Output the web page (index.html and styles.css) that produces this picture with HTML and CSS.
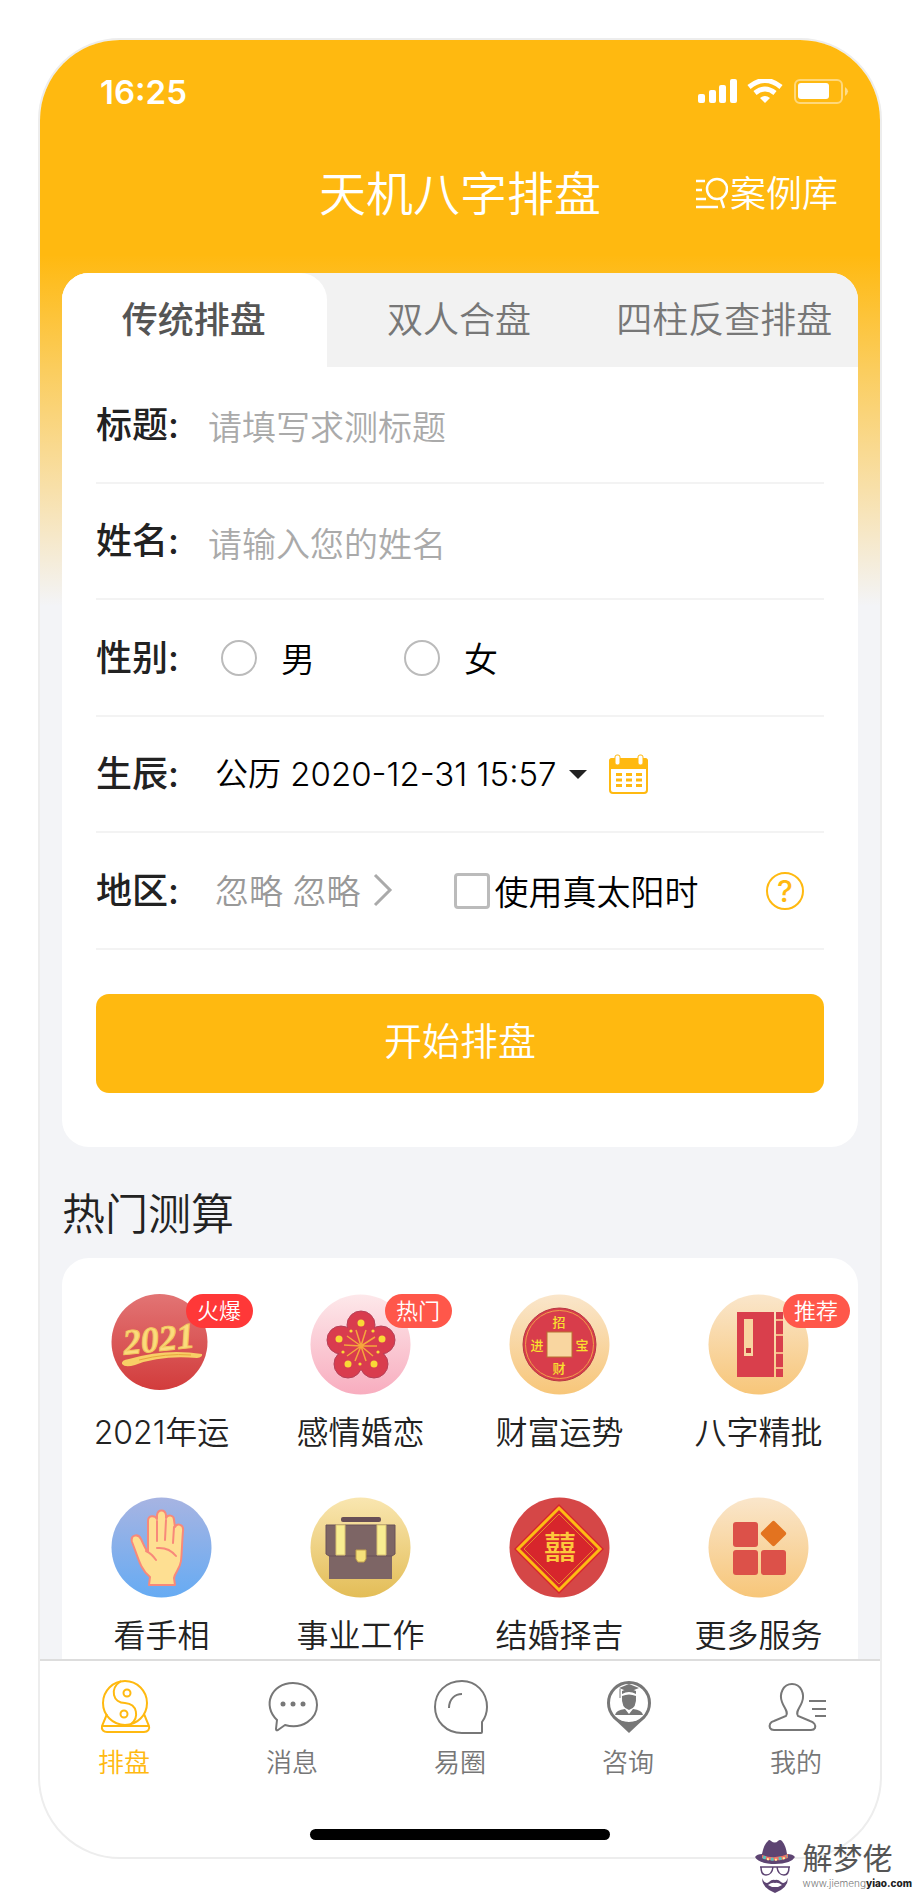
FILE: index.html
```html
<!DOCTYPE html>
<html lang="zh-CN">
<head>
  <meta charset="UTF-8" />
  <meta name="viewport" content="width=device-width, initial-scale=1.0" />
  <title>天机八字排盘</title>
  <link rel="stylesheet" href="styles.css">
</head>
<body>
  <div class="phone">
    <main class="screen">
      <div class="status">
        <span class="time">16:25</span>
        <svg class="status-icons" width="152" height="26" viewBox="0 0 152 26">
          <g fill="#fff">
            <rect x="0" y="15" width="7" height="9" rx="2"/>
            <rect x="11" y="11" width="7" height="13" rx="2"/>
            <rect x="21" y="6" width="7" height="18" rx="2"/>
            <rect x="32" y="0" width="7" height="24" rx="2"/>
            <path d="M62 19 Q67 15 72 19 L67 24 Z"/>
            <rect x="100" y="4" width="31" height="16" rx="3"/>
          </g>
          <path d="M51 8 Q67 -5 83 8 M57 14 Q67 6 77 14" fill="none" stroke="#fff" stroke-width="5"/>
          <rect x="97" y="1" width="47" height="23" rx="5" fill="none" stroke="#fff" stroke-width="2" opacity=".45"/>
          <path d="M147 8 Q153 12 147 17 Z" fill="#fff" opacity=".5"/>
        </svg>
      </div>

      <header class="header">
        <h1>天机八字排盘</h1>
        <a class="cases" href="#cases">
          <svg width="34" height="34" viewBox="0 0 34 34" fill="none" stroke="#fff" stroke-width="2.500">
            <path d="M2 4H11 M2 13H8 M2 22H12 M2 30H24"/>
            <circle cx="23" cy="12" r="10"/>
            <path d="M27 22 L30 31"/>
          </svg>案例库
        </a>
      </header>

      <section class="card">
        <nav class="tabs">
          <button class="tab active" type="button">传统排盘</button>
          <button class="tab" type="button">双人合盘</button>
          <button class="tab" type="button">四柱反查排盘</button>
        </nav>
        <form class="form">
          <div class="row">
            <label class="name" for="title">标题:</label>
            <input class="text" id="title" type="text" placeholder="请填写求测标题">
          </div>
          <div class="row">
            <label class="name" for="username">姓名:</label>
            <input class="text" id="username" type="text" placeholder="请输入您的姓名">
          </div>
          <div class="row">
            <span class="name">性别:</span>
            <div class="options">
              <label class="option"><input type="radio" name="sex">男</label>
              <label class="option"><input type="radio" name="sex">女</label>
            </div>
          </div>
          <div class="row">
            <label class="name" for="birth">生辰:</label>
            <div class="birth">
              <select id="birth">
                <option>公历 2020-12-31 15:57</option>
              </select>
              <svg width="18" height="9" viewBox="0 0 18 9"><path d="M0 0H18L9 9Z" fill="#222"/></svg>
              <button class="plain calendar" type="button" aria-label="日历">
                <svg width="40" height="40" viewBox="0 0 40 40">
                  <rect x="1" y="5" width="37" height="34" rx="3" fill="#fff" stroke="#ffb910" stroke-width="2"/>
                  <path d="M0 15V7Q0 4 3 4H36Q39 4 39 7V15Z" fill="#ffb910"/>
                  <rect x="6" y="1" width="5" height="10" rx="2" fill="#fff" stroke="#ffb910"/>
                  <rect x="29" y="1" width="5" height="10" rx="2" fill="#fff" stroke="#ffb910"/>
                  <path d="M7 20.500H33M7 26H33M7 31.500H33" stroke="#ffb910" stroke-width="3" stroke-dasharray="6 4"/>
                </svg>
              </button>
            </div>
          </div>
          <div class="row">
            <span class="name">地区:</span>
            <div class="region">
              <button class="plain place" type="button">忽略 忽略
                <svg width="20" height="34" viewBox="0 0 20 34"><path d="M2 2L17 17L2 32" fill="none" stroke="#aaa" stroke-width="3"/></svg>
              </button>
              <label class="sun"><input type="checkbox">使用真太阳时</label>
              <button class="plain help" type="button" aria-label="帮助">?</button>
            </div>
          </div>
          <button class="submit" type="button">开始排盘</button>
        </form>
      </section>

      <h2>热门测算</h2>
      <section class="grid">
        <a class="item" href="#year">
          <svg class="icon" viewBox="0 0 101 101">
            <defs><linearGradient id="red" x2="0" y2="1"><stop stop-color="#e27474"/><stop offset="1" stop-color="#d23c3c"/></linearGradient></defs>
            <circle cx="48.500" cy="48" r="48" fill="url(#red)"/>
            <text class="gold" x="48" y="57" transform="rotate(-6 48 48)">2021</text>
            <path d="M11 70 Q10 66 18 65 Q55 54 91 60 Q92 63 86 64 Q50 61 24 71 Q14 74 11 70Z" fill="#f8cf66"/>
            <path d="M28 66 Q55 59 80 61" fill="none" stroke="#e8a53c"/>
          </svg>
          <span class="badge hot">火爆</span>
          <span>2021年运</span>
        </a>
        <a class="item" href="#love">
          <svg class="icon" viewBox="0 0 101 101">
            <defs><linearGradient id="pink" x2="0" y2="1"><stop stop-color="#fde8ea"/><stop offset="1" stop-color="#f8adbf"/></linearGradient></defs>
            <circle cx="50.500" cy="50.500" r="50" fill="url(#pink)"/>
            <g fill="#d93c4e" stroke="#b54057">
              <circle cx="51" cy="31" r="14"/><circle cx="71" cy="46" r="14"/><circle cx="64" cy="70" r="14"/><circle cx="38" cy="70" r="14"/><circle cx="31" cy="46" r="14"/>
            </g>
            <circle cx="51" cy="53" r="23" fill="#d93c4e"/>
            <path d="M51 52L37 42M51 52L46 36M51 52L56 36M51 52L65 43M51 52L67 52M51 52L63 62M51 52L56 67M51 52L45 67M51 52L37 62M51 52L34 51" stroke="#f5a63c" stroke-width="1.500"/>
            <g fill="#f9d936">
              <circle cx="51" cy="29" r="3.500"/><circle cx="72" cy="45" r="3.500"/><circle cx="64" cy="70" r="3.500"/><circle cx="38" cy="70" r="3.500"/><circle cx="29" cy="45" r="3.500"/>
              <circle cx="41" cy="37" r="1.600"/><circle cx="63" cy="37" r="1.600"/><circle cx="33" cy="58" r="1.600"/><circle cx="68" cy="58" r="1.600"/><circle cx="50" cy="70" r="1.600"/>
            </g>
          </svg>
          <span class="badge">热门</span>
          <span>感情婚恋</span>
        </a>
        <a class="item" href="#wealth">
          <svg class="icon" viewBox="0 0 101 101">
            <defs><linearGradient id="sand" x2="0" y2="1"><stop stop-color="#fae6cb"/><stop offset="1" stop-color="#f7c679"/></linearGradient></defs>
            <circle cx="50.500" cy="50.500" r="50" fill="url(#sand)"/>
            <circle cx="50.500" cy="50.500" r="36.500" fill="#d83d4b" stroke="#b83742"/>
            <circle cx="50.500" cy="50.500" r="34" fill="none" stroke="#f0a04a"/>
            <rect x="38" y="38" width="25" height="25" fill="#f9d6a0" stroke="#b87030"/>
            <g class="coin">
              <text x="50" y="33">招</text>
              <text x="28" y="56">进</text>
              <text x="73" y="56">宝</text>
              <text x="50" y="79">财</text>
            </g>
          </svg>
          <span>财富运势</span>
        </a>
        <a class="item" href="#bazi">
          <svg class="icon" viewBox="0 0 101 101">
            <circle cx="50.500" cy="50.500" r="50" fill="url(#sand)"/>
            <path d="M29 18H66V83H29Z M68 18H75V83H68Z" fill="#d93f4c"/>
            <path d="M68 26H75M68 41H75M68 59H75M68 74H75" stroke="#f7b588" stroke-width="2"/>
            <rect x="36" y="25" width="9" height="37" fill="#f8d5a1"/>
            <rect x="38" y="54" width="5" height="5" fill="#c9353f"/>
          </svg>
          <span class="badge">推荐</span>
          <span>八字精批</span>
        </a>
        <a class="item" href="#palm">
          <svg class="icon" viewBox="0 0 101 101">
            <defs><linearGradient id="blue" x2="0" y2="1"><stop stop-color="#a7b4e2"/><stop offset="1" stop-color="#66abf3"/></linearGradient></defs>
            <circle cx="50.500" cy="50.500" r="50" fill="url(#blue)"/>
            <g stroke="#f8897a" stroke-width="2" stroke-linejoin="round">
              <path d="M21 45C19 38 27 36 30 42C32 46 34 52 37 55L37 24C37 18 44 18 46 22L46 18C47 12 54 12 55 18L55 21C57 17 63 18 63 23L64 30C66 26 73 27 72 34C71 45 71 55 70 64C69 72 64 75 63 81L64 88L38 88L39 80C29 72 27 60 21 45Z" fill="#fedf92"/>
              <path d="M46 24L46 44M55 23L54 43M63 30L62 46M46 51Q58 50 65 59M35 54Q41 57 45 63" fill="none" stroke-linecap="round"/>
            </g>
          </svg>
          <span>看手相</span>
        </a>
        <a class="item" href="#career">
          <svg class="icon" viewBox="0 0 101 101">
            <defs><linearGradient id="yellow" x2="0" y2="1"><stop stop-color="#f9e6b0"/><stop offset="1" stop-color="#e3bd57"/></linearGradient></defs>
            <circle cx="50.500" cy="50.500" r="50" fill="url(#yellow)"/>
            <rect x="31" y="20" width="40" height="5" rx="2" fill="#684f56"/>
            <path d="M19 59H82V82H19Z" fill="#7d6565"/>
            <path d="M16 28H85V57L82 59H19L16 57Z" fill="#7d6565" stroke="#6b5358"/>
            <path d="M26 28H35V58H26ZM67 28H76V58H67Z" fill="#f8ed91" stroke="#d9c173"/>
            <path d="M46 53H56V62L54 65H48L46 62Z" fill="#f5e17a" stroke="#c2a24f"/>
          </svg>
          <span>事业工作</span>
        </a>
        <a class="item" href="#wedding">
          <svg class="icon" viewBox="0 0 101 101">
            <circle cx="50.500" cy="50.500" r="50" fill="#d54747"/>
            <path d="M50 7L95 52L50 97L5 52Z" fill="#d7262c"/>
            <path d="M50 11L91 52L50 93L9 52Z" fill="none" stroke="#fdbb14" stroke-width="3"/>
            <path d="M50 17L85 52L50 87L15 52Z" fill="none" stroke="#e8862a"/>
            <text class="joy" x="51" y="62">囍</text>
          </svg>
          <span>结婚择吉</span>
        </a>
        <a class="item" href="#more">
          <svg class="icon" viewBox="0 0 101 101">
            <circle cx="50.500" cy="50.500" r="50" fill="url(#sand)"/>
            <g fill="#dc5149">
              <rect x="25" y="25" width="25" height="25" rx="3"/>
              <rect x="25" y="53" width="25" height="25" rx="3"/>
              <rect x="53" y="53" width="25" height="25" rx="3"/>
            </g>
            <rect x="56" y="27" width="19" height="19" rx="2" transform="rotate(45 65.500 36.500)" fill="#e3731f"/>
          </svg>
          <span>更多服务</span>
        </a>
      </section>
    </main>

    <nav class="tabbar">
      <a class="on" href="#pan">
        <svg viewBox="0 0 56 56">
          <circle cx="29" cy="24" r="22"/>
          <path d="M25 2C13 10 17 24 29 24C42 25 43 39 35 45M11 35L6 47C5 51 8 53 11 53H48C52 53 54 50 53 47L48 35M6 47H53"/>
          <circle cx="31" cy="14" r="3.500"/><circle cx="28" cy="35" r="3.500"/>
        </svg>
        排盘
      </a>
      <a href="#msg">
        <svg viewBox="0 0 56 56">
          <path d="M13 41C-2 27 7 4 29 4C43 4 53 14 53 26C53 40 38 51 21 46L14 51Q12 52 12 50Z"/>
          <g class="solid"><circle cx="19" cy="25" r="2.500"/><circle cx="29" cy="25" r="2.500"/><circle cx="39" cy="25" r="2.500"/></g>
        </svg>
        消息
      </a>
      <a href="#circle">
        <svg viewBox="0 0 56 56">
          <path d="M50 53Q50 54 49 54H30C14 54 3 42 3 28C3 13 14 2 30 2C44 2 55 13 55 28C55 34 53 39 50 43ZM17 29C17 20 23 15 30 15"/>
        </svg>
        易圈
      </a>
      <a href="#ask">
        <svg viewBox="0 0 56 56">
          <path class="solid" d="M12 38Q29 48 46 38L29 54Z"/>
          <circle cx="29" cy="24" r="20.500" stroke-width="3"/>
          <path class="solid" d="M29 5L39 9L29 13L19 9ZM22 12Q29 8 36 12V15Q29 11 22 15ZM22 17Q29 14 36 17Q37 29 29 31Q21 29 22 17ZM15 36Q16 31 25 30L29 35L33 30Q42 31 43 36Z"/>
          <path d="M20 10V19" stroke-width="1"/>
        </svg>
        咨询
      </a>
      <a href="#me">
        <svg viewBox="0 0 56 56">
          <path d="M24 5C15 5 11 15 14 23C16 29 21 33 18 37L6 42C2 43 1 46 2 49Q3 51 6 51H43Q46 51 47 49C48 46 46 43 42 42L30 37C27 33 32 29 34 23C37 15 33 5 24 5ZM41 22H58M44 30H58M47 37H58"/>
        </svg>
        我的
      </a>
    </nav>
    <div class="home"></div>
  </div>

  <div class="mark">
    <svg width="42" height="54" viewBox="0 0 42 54">
      <path d="M1 18Q3 15 8 15Q10 5 14 2Q15 0 17 2Q21 5 24 2Q26 0 28 2Q32 7 33 15Q39 15 41 18Q37 25 21 25Q5 25 1 18Z" fill="#5d4472"/>
      <path d="M8 16Q21 21 34 15V19Q21 24 8 19Z" fill="#ef7264"/>
      <path d="M9 18Q21 23 33 17" fill="none" stroke="#58c1bd" stroke-width="3" stroke-dasharray="3 5"/>
      <path d="M13 20Q21 22 31 19" fill="none" stroke="#fff0a0" stroke-width="2" stroke-dasharray="2 6"/>
      <path d="M6 28H36M7 28Q7 36 12 36Q18 36 19 28M23 28Q24 36 30 36Q35 36 35 28" fill="none" stroke="#5d4472" stroke-width="1.500"/>
      <path d="M8 39Q11 46 15 43Q18 40 21 41Q24 40 27 43Q31 46 34 39Q34 49 21 54Q8 49 8 39Z" fill="#5d4472"/>
      <path d="M14 46Q18 43 21 44Q24 43 28 46L24 48H18Z" fill="#fff"/>
    </svg>
    <div>
      <p class="brand">解梦佬</p>
      <p class="url">www.jiemeng<b>yiao.com</b></p>
    </div>
  </div>
</body>
</html>
```
FILE: styles.css
```css
* { box-sizing: border-box; }
body {
  position: relative;
  margin: 0;
  padding: 38px;
  background: #fff;
  color: #222;
  font-family: Inter, "Noto Sans CJK SC", sans-serif;
  font-weight: 350;
}
h1, h2, p { margin: 0; font-weight: 350; }
a { color: inherit; text-decoration: none; }
button, input, select { font: inherit; color: inherit; margin: 0; }
svg { flex: none; }

.phone {
  border: 2px solid #ededed;
  border-radius: 82px;
  overflow: hidden;
  background: #fff;
}
.screen {
  padding: 0 22px;
  background: linear-gradient(#ffb910 0, #ffb910 215px, #fbcd5e 330px, #f8e0aa 450px, #f3f4f7 566px);
}

.status {
  display: flex;
  justify-content: space-between;
  align-items: center;
  padding: 32px 8px 0 38px;
  color: #fff;
}
.time { font-size: 33px; font-weight: 600; line-height: 40px; }
.header {
  display: grid;
  grid-template-columns: 1fr auto 1fr;
  align-items: center;
  padding: 50px 20px 47px;
  color: #fff;
}
h1 { grid-column: 2; font-size: 47px; line-height: 64px; }
.cases {
  display: flex;
  justify-content: flex-end;
  align-items: center;
  gap: 2px;
  font-size: 36px;
  line-height: 40px;
}

.card { border-radius: 27px; background: #fff; overflow: hidden; }
.tabs { display: grid; grid-template-columns: repeat(3, 1fr); background: #f2f2f2; }
.tab {
  height: 94px;
  padding: 0 2px 6px 0;
  border: 0;
  background: none;
  color: #777;
  font-size: 36px;
}
.tab.active { border-radius: 0 27px 0 0; background: #fff; color: #555; font-weight: 500; }
.form { padding: 0 34px 54px; }
.row {
  display: flex;
  align-items: center;
  height: 116px;
  border-bottom: 2px solid #f3f3f3;
  font-size: 34px;
}
.row:nth-child(odd) { height: 117px; }
.name { width: 112px; padding-bottom: 6px; font-size: 36px; font-weight: 500; }
.text { flex: 1; min-width: 0; padding: 6px 0 0; border: 0; outline: 0; background: none; }
.text::placeholder { color: #aaa; opacity: 1; }
.options { display: flex; gap: 89px; padding-left: 13px; color: #000; }
.option { display: flex; align-items: center; gap: 24px; }
.option input, .sun input {
  appearance: none;
  width: 36px;
  height: 36px;
  border: 2px solid #bbb;
  border-radius: 50%;
  background: #fff;
}
.birth, .region { display: flex; flex: 1; align-items: center; padding-left: 7px; color: #000; }
.birth select { appearance: none; padding: 0 12px 0 0; border: 0; background: none; font-size: 33px; }
.plain { display: flex; align-items: center; padding: 0; border: 0; background: none; }
.calendar { margin-left: 22px; }
.place { gap: 12px; padding-bottom: 2px; color: #999; }
.sun { display: flex; align-items: center; gap: 5px; margin-left: 61px; }
.sun input { border-radius: 4px; border-width: 3px; }
.help {
  justify-content: center;
  width: 38px;
  height: 38px;
  margin: 0 20px 0 auto;
  border: 2px solid #ffb910;
  border-radius: 50%;
  color: #ffb910;
  font-size: 30px;
  font-weight: 500;
}
.submit {
  width: 100%;
  height: 99px;
  margin-top: 44px;
  padding: 0 0 10px;
  border: 0;
  border-radius: 13px;
  background: #ffb910;
  color: #fff;
  font-size: 38px;
}

h2 { padding: 35px 0 12px; font-size: 43px; line-height: 64px; }
.grid {
  display: grid;
  grid-template-columns: repeat(4, 1fr);
  row-gap: 44px;
  padding: 36px 0 3px;
  border-radius: 27px 27px 0 0;
  background: #fff;
}
.item {
  position: relative;
  display: flex;
  flex-direction: column;
  align-items: center;
  gap: 18px;
  font-size: 32px;
  line-height: 40px;
}
.icon { width: 101px; height: 101px; }
.badge {
  position: absolute;
  top: 0;
  left: calc(50% + 24px);
  width: 67px;
  border-radius: 17px;
  background: #ff574a;
  color: #fff;
  font-size: 22px;
  line-height: 34px;
  text-align: center;
}
.badge.hot { background: #ff3838; }
.gold { fill: #fbdc7c; stroke: #f4c65f; font: italic 700 36px "Liberation Serif", serif; text-anchor: middle; }
.coin { fill: #f9e02f; font-size: 13px; font-weight: 500; text-anchor: middle; }
.joy { fill: #fdc83c; font-size: 32px; font-weight: 500; text-anchor: middle; }

.tabbar {
  display: grid;
  grid-template-columns: repeat(5, 1fr);
  padding: 18px 0 48px;
  border-top: 2px solid #ddd;
}
.tabbar a {
  display: flex;
  flex-direction: column;
  align-items: center;
  gap: 10px;
  color: #777;
  font-size: 26px;
  line-height: 36px;
}
.tabbar svg {
  width: 56px;
  height: 56px;
  overflow: visible;
  fill: none;
  stroke: currentColor;
  stroke-width: 2;
}
.tabbar .solid { fill: currentColor; stroke: none; }
.tabbar .on { color: #ffb910; }
.home { width: 300px; height: 11px; margin: 0 auto 17px; border-radius: 6px; background: #000; }

/* site mark over the bottom right corner */
.mark { position: absolute; right: 8px; bottom: 4px; display: flex; gap: 7px; align-items: center; }
.brand { color: #555; font-size: 30px; font-weight: 400; line-height: 34px; }
.url { color: #777; font-size: 10px; line-height: 16px; }
.url b { color: #222; font-weight: 800; }
```
